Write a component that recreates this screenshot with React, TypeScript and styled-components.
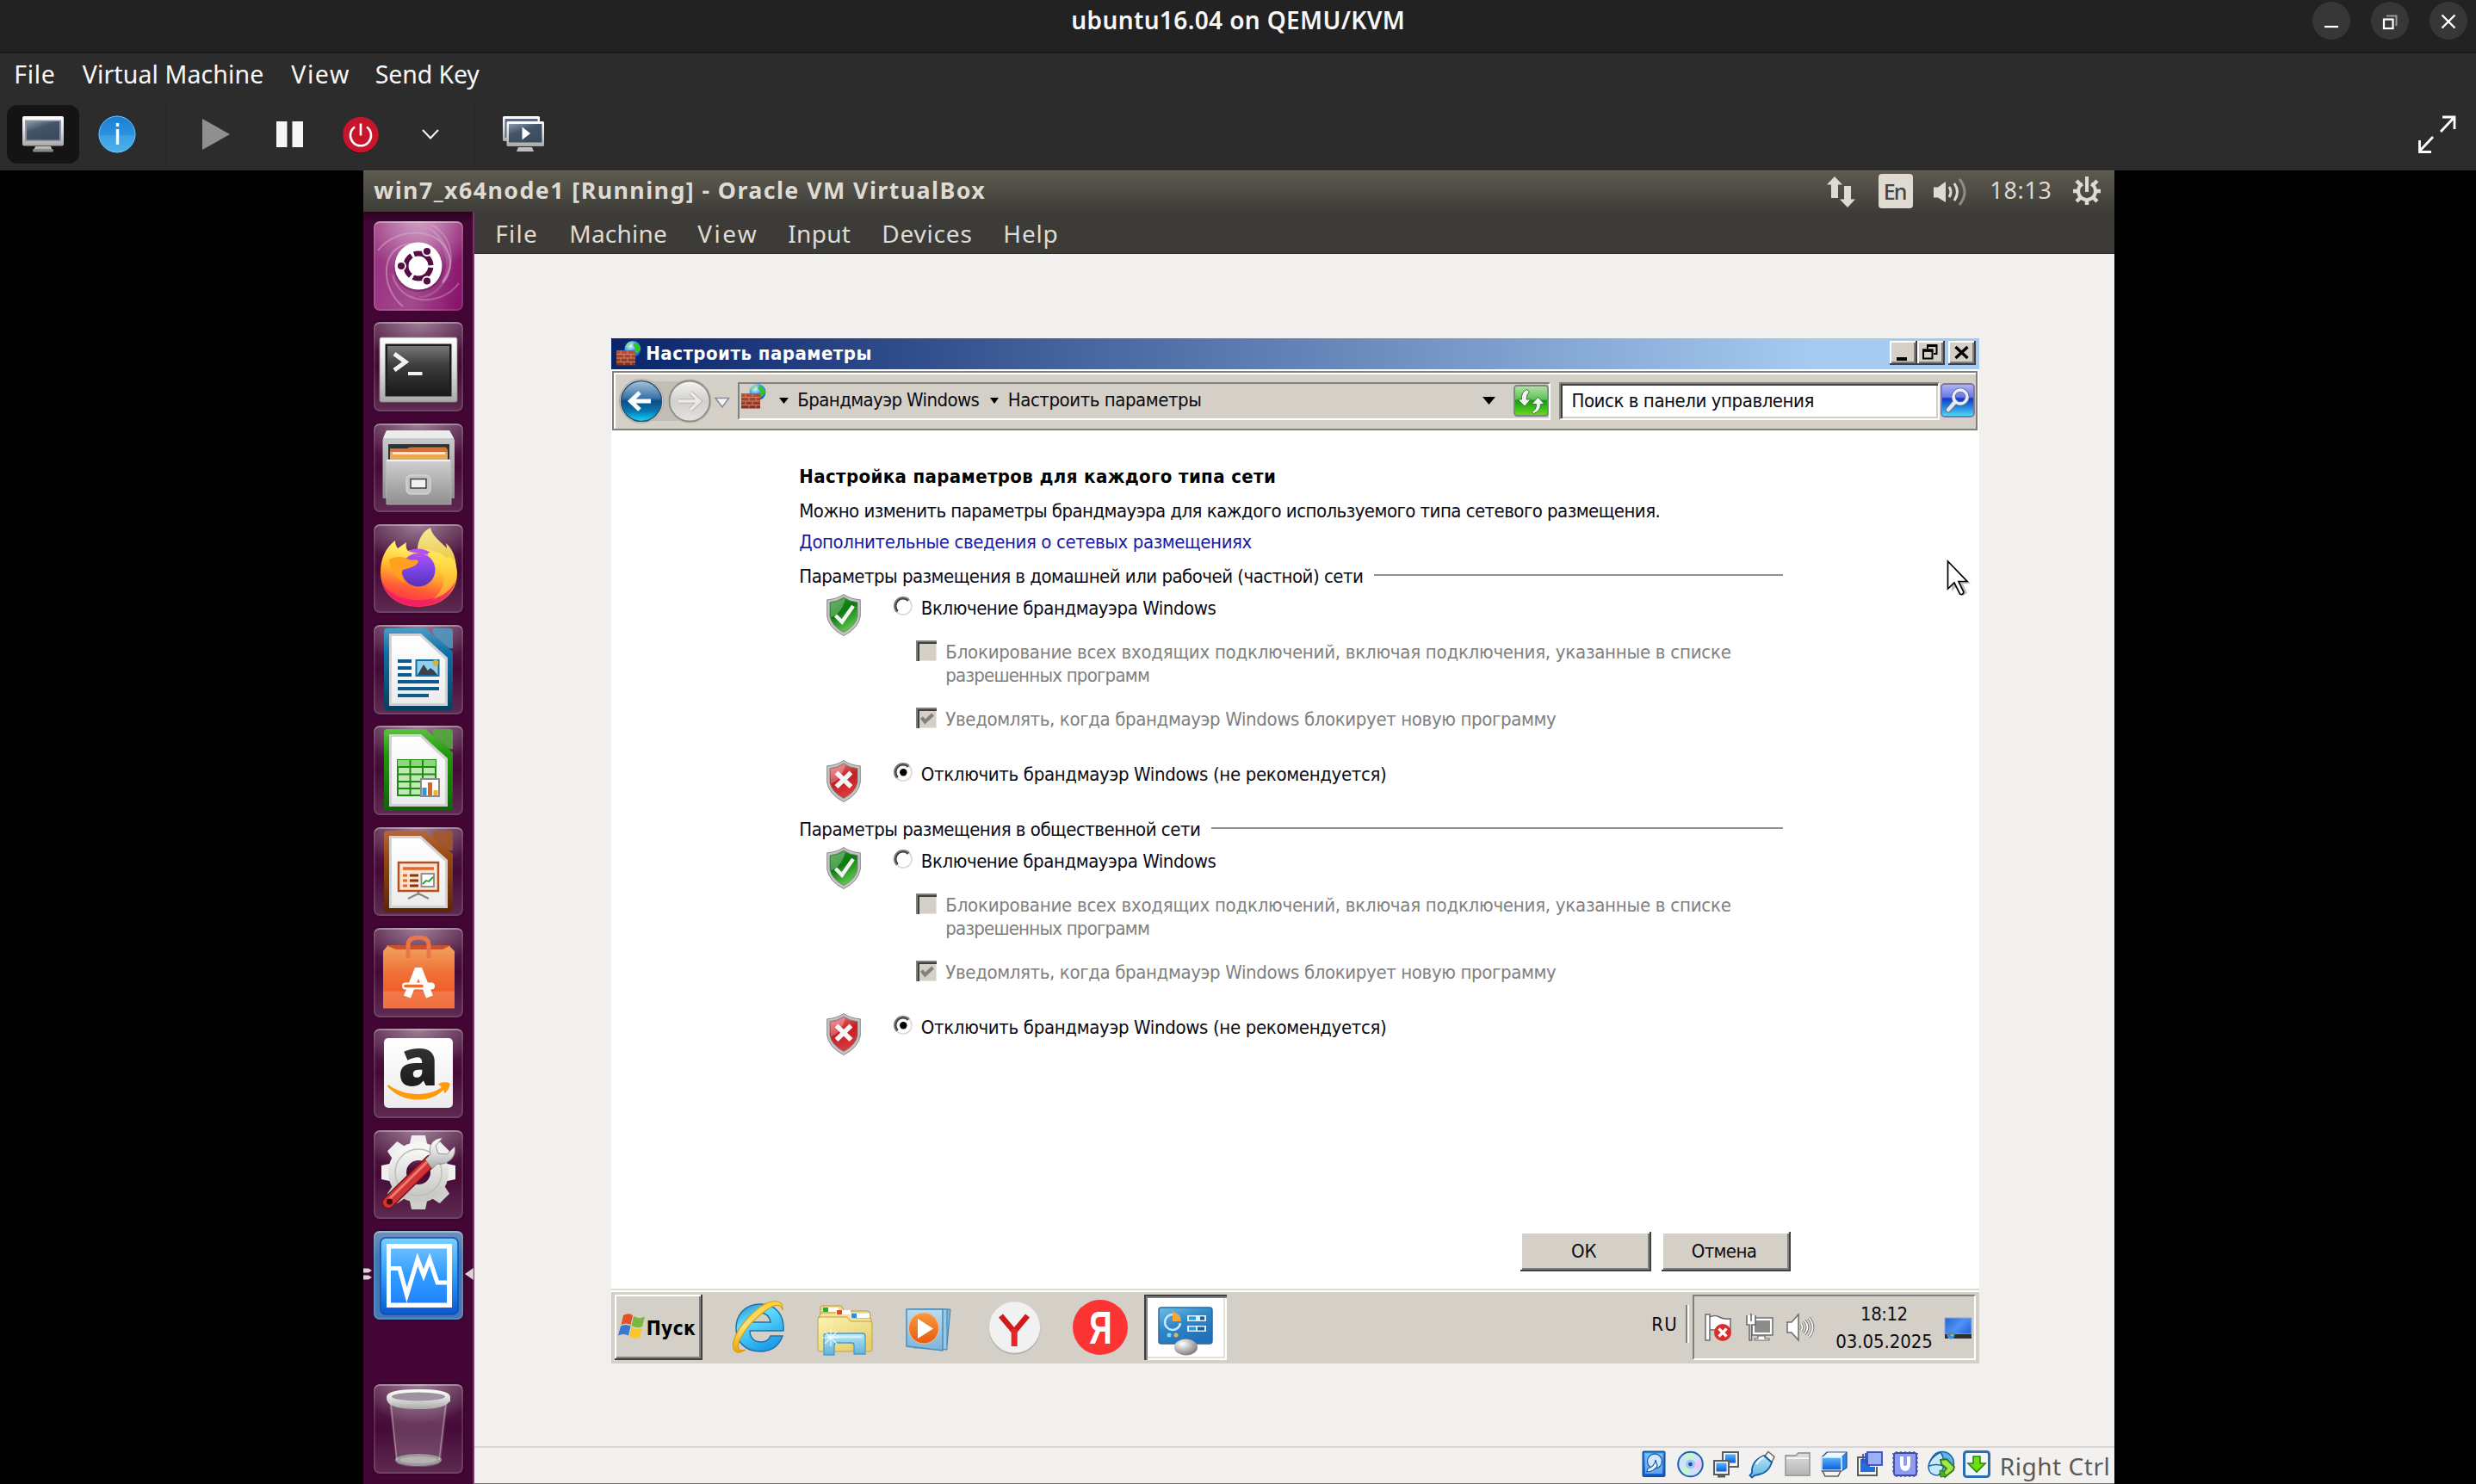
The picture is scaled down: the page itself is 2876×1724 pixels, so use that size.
import React, { useLayoutEffect, useRef, useState } from "react";
import styled, { createGlobalStyle, css } from "styled-components";

const Global = createGlobalStyle`
  html, body { margin: 0; padding: 0; background: #000; }
  * { box-sizing: border-box; }
  svg { display: block; flex: none; overflow: visible; }
`;

const uiFont = `"Noto Sans", "Open Sans", sans-serif`;
const winFont = `"DejaVu Sans Condensed", "DejaVu Sans", "Liberation Sans", sans-serif`;

/* ---------- text that is tracked to a known width ---------- */
const FitBox = styled.span<{ $w: number }>`
  display: block;
  flex: none;
  width: ${(p) => p.$w}px;
  white-space: nowrap;
`;
const FitInner = styled.span`
  display: inline-block;
  margin-left: -0.7px;
  font-variant-ligatures: none;
`;

function Fit({ w, children }: { w: number; children: string }) {
  const ref = useRef<HTMLSpanElement>(null);
  const [spacing, setSpacing] = useState(0);
  useLayoutEffect(() => {
    const el = ref.current;
    if (!el) return;
    const natural = el.getBoundingClientRect().width;
    setSpacing((w + 1.5 - natural) / Math.max(1, children.length - 1));
  }, []);
  return (
    <FitBox $w={w}>
      <FitInner ref={ref} style={{ letterSpacing: `${spacing}px` }}>
        {children}
      </FitInner>
    </FitBox>
  );
}

/* ---------- host window ---------- */
const Desktop = styled.div`
  position: relative;
  width: 2876px;
  height: 1724px;
  overflow: hidden;
  display: flex;
  flex-direction: column;
  background: #000;
`;
const HostTitle = styled.header`
  height: 62px;
  flex: none;
  display: grid;
  grid-template-columns: 1fr auto 1fr;
  background: #222;
  border-bottom: 2px solid #1a1a1a;
  font: 600 28px/38px ${uiFont};
  color: #f7f7f7;
  padding-top: 4px;
`;
const HostControls = styled.div`
  display: flex;
  justify-content: flex-end;
  gap: 24px;
  padding-right: 10px;
  margin-top: -2px;
`;
const RoundButton = styled.span`
  width: 44px;
  height: 44px;
  border-radius: 50%;
  background: #373737;
`;
const HostMenu = styled.nav`
  height: 52px;
  flex: none;
  display: flex;
  padding: 5px 0 0 17px;
  background: #2c2c2c;
  font: 400 28.5px/38px ${uiFont};
  color: #f7f7f7;
  border-bottom: 1px solid #292929;
`;
const MenuItem = styled.div<{ $gap: number }>`
  margin-left: ${(p) => p.$gap}px;
`;
const HostToolbar = styled.div`
  height: 84px;
  flex: none;
  display: flex;
  align-items: center;
  padding-left: 8px;
  background: #2c2c2c;
`;
const ToolButton = styled.div<{ $w: number; $active?: boolean }>`
  width: ${(p) => p.$w}px;
  height: 68px;
  display: flex;
  align-items: center;
  justify-content: center;
  border-radius: 12px;
  background: ${(p) => (p.$active ? "#141414" : "transparent")};
`;
const ToolSeparator = styled.div`
  width: 2px;
  height: 68px;
  background: #282828;
`;
const Spring = styled.div`
  flex: 1;
`;

/* ---------- Ubuntu screen ---------- */
const VmScreen = styled.main`
  flex: 1;
  min-height: 0;
  width: 2034px;
  margin-left: 422px;
  display: flex;
  flex-direction: column;
`;
const TopPanel = styled.div`
  height: 48px;
  flex: none;
  display: flex;
  align-items: flex-start;
  padding: 5px 16px 0 13px;
  background: linear-gradient(#5d5a50, #3e3d38);
  box-shadow: inset 0 1px #6a675d;
  color: #dfdbd2;
  font: 700 26.8px/36px ${uiFont};
`;
const Indicator = styled.div<{ $gap: number; $top?: number }>`
  margin: ${(p) => p.$top ?? 0}px 0 0 ${(p) => p.$gap}px;
  font-weight: 400;
`;
const LangBox = styled.div`
  width: 40px;
  height: 40px;
  margin: -1px 0 0 26px;
  padding-left: 7px;
  border-radius: 4px;
  background: #dfdbd2;
  color: #45443f;
  font: 500 25px/40px ${uiFont};
`;
const VmBody = styled.div`
  flex: 1;
  min-height: 0;
  display: flex;
`;
const Launcher = styled.aside`
  width: 129px;
  flex: none;
  display: flex;
  flex-direction: column;
  align-items: flex-start;
  gap: 13.7px;
  padding: 11px 0 0 11.5px;
  background: linear-gradient(#2a0420, #430634 14px);
  border-right: 2px solid #6d3a62;
`;
const Tile = styled.div<{ $kind?: "dash" | "active"; $push?: number }>`
  position: relative;
  width: 104px;
  height: 103.6px;
  flex: none;
  margin-top: ${(p) => p.$push ?? 0}px;
  border-radius: 7px;
  background: radial-gradient(ellipse 70px 46px at 50% 0, rgba(255, 255, 255, 0.42), rgba(255, 255, 255, 0)),
    linear-gradient(rgba(255, 255, 255, 0.12), rgba(255, 255, 255, 0.02) 50%, rgba(255, 255, 255, 0.15));
  box-shadow: inset 0 0 0 2px rgba(255, 255, 255, 0.12), inset 0 2px rgba(255, 255, 255, 0.25), 0 0 3px rgba(0, 0, 0, 0.5);
  ${(p) =>
    p.$kind === "dash" &&
    css`
      background: radial-gradient(ellipse 70px 60px at 50% 0, #cf9cc1, rgba(180, 90, 160, 0)),
        linear-gradient(100deg, #96307d, #a34a8e 50%, #850d68);
    `}
  ${(p) =>
    p.$kind === "active" &&
    css`
      background: linear-gradient(#6f92b8, #3f77b5 30%, #4278b6);
    `}
`;
const RunMark = styled.div<{ $side: "left" | "right" }>`
  position: absolute;
  top: 42px;
  ${(p) => (p.$side === "left" ? "left: -11.5px;" : "right: -12px;")}
`;
const VmMain = styled.section`
  flex: 1;
  min-width: 0;
  display: flex;
  flex-direction: column;
  background: #f1f0ee;
`;
const VmMenu = styled.nav`
  height: 49px;
  flex: none;
  display: flex;
  padding: 6px 0 0 25px;
  background: #3c3b37;
  border-bottom: 1px solid #2f2e2b;
  color: #dfdbd2;
  font: 400 28px/38px ${uiFont};
`;
const GuestArea = styled.div`
  flex: 1;
  min-height: 0;
  padding: 97.7px 0 0 159px;
`;
const StatusBar = styled.footer`
  height: 44px;
  flex: none;
  display: flex;
  align-items: flex-start;
  padding: 3px 0 0 1355px;
  gap: 9.6px;
  border-top: 2px solid #d9d7d4;
  border-bottom: 1.5px solid #6f6d6a;
  background: #f2f1ef;
  color: #5a5a5a;
  font: 400 28px/38px ${uiFont};
`;
const HostKey = styled.div`
  margin: -1px 0 0 1.5px;
`;

/* ---------- Windows guest ---------- */
const Guest = styled.div`
  width: 1589px;
  height: 1191.6px;
  display: flex;
  flex-direction: column;
  background: #fff;
  font: 400 22px/28px ${winFont};
  font-stretch: condensed;
  color: #0b0b14;
`;
const raised = css`
  background: #d4d0c8;
  box-shadow: inset -2px -2px #404040, inset 2px 2px #fff, inset -4px -4px #808080;
`;
const WinTitle = styled.div`
  height: 36px;
  flex: none;
  display: flex;
  align-items: flex-start;
  padding: 3px 4px 0 6px;
  background: linear-gradient(90deg, #0a246a, #a6caf0 88%);
  color: #fff;
  font-weight: 700;
`;
const WinTitleText = styled.div`
  margin: 1.5px 0 0 6px;
`;
const WinButton = styled.div<{ $gap?: number }>`
  ${raised}
  width: 32px;
  height: 28px;
  margin-left: ${(p) => p.$gap ?? 0}px;
`;
const NavBar = styled.div`
  height: 69px;
  flex: none;
  display: flex;
  align-items: flex-start;
  margin: 2.3px 2px 0 1px;
  padding: 11px 0 0 5.5px;
  background: #d4d0c8;
  border: 2px solid #848078;
  box-shadow: inset 2px 2px #fff;
`;
const AddressBox = styled.div`
  width: 946px;
  height: 44px;
  display: flex;
  align-items: flex-start;
  margin-left: 9px;
  padding-left: 2.5px;
  border: 2px solid;
  border-color: #808080 #fff #fff #808080;
`;
const Crumb = styled.div<{ $gap: number }>`
  margin: 5px 0 0 ${(p) => p.$gap}px;
`;
const Glyph = styled.div<{ $gap?: number; $top?: number }>`
  flex: none;
  margin: ${(p) => p.$top ?? 0}px 0 0 ${(p) => p.$gap ?? 0}px;
`;
const SearchBox = styled.div`
  width: 443px;
  height: 44px;
  margin-left: 9.5px;
  padding: 6.5px 0 0 13.5px;
  background: #fff;
  border: 2px solid;
  border-color: #808080 #fff #fff #808080;
  box-shadow: inset 2px 2px #404040, inset -2px -2px #d4d0c8;
`;
const Page = styled.div`
  flex: 1;
  min-height: 0;
  display: flex;
  flex-direction: column;
  padding: 40.4px 0 0 219px;
`;
const Heading = styled.div`
  height: 26px;
  font-weight: 700;
  color: #000;
`;
const Paragraph = styled.div`
  height: 26px;
  margin-top: 14px;
`;
const LinkLine = styled.a`
  height: 26px;
  margin-top: 9.6px;
  color: #1a1aa6;
`;
const Group = styled.section<{ $first?: boolean }>`
  height: 294px;
  flex: none;
  margin-top: ${(p) => (p.$first ? 14 : 0)}px;
`;
const GroupTitle = styled.div`
  display: flex;
  width: 1142px;
  height: 26px;
`;
const GroupRule = styled.div`
  flex: 1;
  height: 2px;
  margin: 11px 0 0 13px;
  background: #909090;
`;
const Option = styled.div<{ $h: number }>`
  display: flex;
  height: ${(p) => p.$h}px;
  padding-left: 31px;
`;
const OptionBody = styled.div`
  padding: 3px 0 0 38px;
`;
const RadioRow = styled.div`
  display: flex;
  height: 26px;
  align-items: flex-start;
  gap: 10.5px;
`;
const CheckRow = styled.div<{ $gap: number }>`
  display: flex;
  gap: 11px;
  margin: ${(p) => p.$gap}px 0 0 26px;
  color: #808080;
  line-height: 26.6px;
`;
const CheckBox = styled.div`
  width: 24px;
  height: 24px;
  margin-top: -1px;
  background: #d4d0c8;
  box-shadow: inset 2px 2px #808080, inset 4px 4px #404040, inset -1px -1px #e8e6e1;
`;
const Buttons = styled.div`
  display: flex;
  gap: 12px;
  padding-left: 837px;
  margin-top: 187.5px;
`;
const PushButton = styled.div<{ $w: number }>`
  ${raised}
  width: ${(p) => p.$w}px;
  height: 46px;
  display: flex;
  justify-content: center;
  padding: 8.5px 4px 0 0;
`;
const TaskBar = styled.div`
  height: 87px;
  flex: none;
  display: flex;
  align-items: flex-start;
  padding: 5px 4px 0 4px;
  background: #d4d0c8;
  border-top: 2px solid #dedbd4;
  box-shadow: inset 0 2px #fff;
`;
const StartButton = styled.div`
  ${raised}
  width: 102px;
  height: 76px;
  display: flex;
  padding: 22px 0 0 4px;
  font-weight: 700;
  font-size: 22.5px;
  color: #000;
`;
const StartText = styled.div`
  margin: 2.5px 0 0 1.5px;
`;
const ActiveTask = styled.div`
  width: 96px;
  height: 76px;
  margin-left: 18.5px;
  padding: 14px 0 0 16px;
  background: #fff;
  box-shadow: inset 2px 2px #404040, inset 4px 4px #808080, inset -2px -2px #fff, inset -4px -4px #e4e1db;
`;
const LangText = styled.div`
  margin: 21px 2px 0 0;
`;
const LangRule = styled.div`
  width: 4px;
  height: 44px;
  margin: 12px 4px 0 8.5px;
  background: #808080;
  border-right: 2px solid #fff;
`;
const Tray = styled.div`
  width: 329.5px;
  height: 76px;
  display: flex;
  padding: 20px 0 0 11px;
  border: 2px solid;
  border-color: #808080 #fff #fff #808080;
`;
const Clock = styled.div`
  width: 112px;
  height: 64px;
  margin: -12px 0 0 26px;
  display: flex;
  flex-direction: column;
  align-items: center;
  gap: 6px;
  line-height: 26px;
`;
const Pointer = styled.div`
  position: absolute;
  left: 2260.5px;
  top: 650px;
`;

/* ---------- shared gradients ---------- */
const grad = (id: string, stops: [number, string][], x2 = 0, y2 = 1) => (
  <linearGradient id={id} x1="0" y1="0" x2={x2} y2={y2}>
    {stops.map(([o, c]) => (
      <stop key={o} offset={o} stopColor={c} />
    ))}
  </linearGradient>
);
const DefsHolder = styled.svg`
  position: absolute;
`;
const Defs = () => (
  <DefsHolder width="0" height="0">
    <defs>
      {grad("silver", [[0, "#ffffff"], [0.5, "#dcdcdc"], [1, "#a8a8a8"]])}
      {grad("screen", [[0, "#8b98a8"], [0.45, "#445468"], [1, "#3c4a5e"]], 0.6, 1)}
      {grad("term", [[0, "#777"], [0.4, "#3c3c3c"], [1, "#1a1a1a"]])}
      {grad("info", [[0, "#1a7fd4"], [0.52, "#2b92de"], [0.54, "#3ba0e4"], [1, "#4db1ea"]])}
      {grad("drawer", [[0, "#d0d0d0"], [1, "#8f8f8f"]])}
      {grad("fox", [[0, "#fff36b"], [0.3, "#ffc02e"], [0.6, "#ff5a36"], [0.85, "#ff2a52"], [1, "#e5017c"]], -0.25, 1)}
      {grad("foxTail", [[0, "#fff89a"], [0.5, "#ffdb45"], [1, "#ffa02c"]])}
      {grad("foxGlobe", [[0, "#b84ff0"], [0.5, "#7a45e8"], [1, "#5a2fb0"]])}
      {grad("page", [[0, "#ffffff"], [1, "#ececec"]])}
      {grad("docBlue", [[0, "#4a9cc8"], [0.3, "#0f6fa5"], [1, "#06405f"]])}
      {grad("docGreen", [[0, "#5cc040"], [0.3, "#1f9a0c"], [1, "#116205"]])}
      {grad("docBrown", [[0, "#b5673c"], [0.3, "#9a4a12"], [1, "#5c2603"]])}
      {grad("bag", [[0, "#f0a25e"], [0.45, "#ee6f35"], [0.72, "#f0602a"], [0.73, "#f2794a"], [1, "#ee7040"]])}
      {grad("amz", [[0, "#777"], [0.35, "#333"], [1, "#111"]])}
      {grad("gear", [[0, "#f6f6f4"], [1, "#c9c9c6"]])}
      {grad("vbOut", [[0, "#7cd0ff"], [0.5, "#2f9cf8"], [1, "#0c55d0"]])}
      {grad("vbIn", [[0, "#67beff"], [0.5, "#309cff"], [1, "#2283ff"]])}
      {grad("back", [[0, "#a8c4dc"], [0.42, "#3a74a8"], [0.5, "#0b4f86"], [0.75, "#0878b4"], [1, "#10d8ff"]])}
      {grad("fwd", [[0, "#f4f4f2"], [0.5, "#d2d0cc"], [1, "#e4e2de"]])}
      {grad("green", [[0, "#b4e4a8"], [0.45, "#5fbf58"], [0.5, "#149a14"], [1, "#6cdc20"]])}
      {grad("find", [[0, "#b4b8f4"], [0.4, "#6a78e4"], [0.45, "#1238c8"], [0.7, "#2484dc"], [1, "#50e0f8"]])}
      {grad("shieldG", [[0, "#1f9a22"], [0.5, "#0c7a10"], [1, "#5ec84a"]], 0.5, 1)}
      {grad("shieldR", [[0, "#f08080"], [0.5, "#c41c22"], [1, "#d83a3a"]], 0.3, 1)}
      {grad("ie", [[0, "#1e86cc"], [0.4, "#5fdcff"], [1, "#1c9ee8"]], 0.5, 1)}
      {grad("gold", [[0, "#ffd23a"], [0.5, "#fbe27a"], [1, "#e8a400"]])}
      {grad("folder", [[0, "#fdf2b4"], [1, "#e6cf6a"]], 0.7, 1)}
      {grad("sky", [[0, "#b8e6f8"], [1, "#5fb2dc"]])}
      {grad("wmp", [[0, "#bcdcf0"], [1, "#7cb4dc"]])}
      {grad("orange", [[0, "#f89a40"], [1, "#e85a10"]])}
      {grad("cp", [[0, "#6cc0ec"], [0.5, "#2f86c8"], [1, "#2270b8"]], 0.6, 1)}
      {grad("blue", [[0, "#58b4ff"], [1, "#0c5cd8"]])}
      {grad("desk", [[0, "#2a62d0"], [0.6, "#4f94f4"], [1, "#2f6ee0"]], 1, 0.6)}
      {grad("grey", [[0, "#e0e0e0"], [1, "#b4b4b4"]])}
      {grad("brick", [[0, "#b4573c"], [1, "#8a2c18"]])}
      <radialGradient id="globe" cx="0.35" cy="0.3" r="0.8">
        <stop offset="0" stopColor="#e8f8ff" />
        <stop offset="0.4" stopColor="#4fa8f0" />
        <stop offset="1" stopColor="#1450b8" />
      </radialGradient>
      <radialGradient id="ball" cx="0.35" cy="0.3" r="0.8">
        <stop offset="0" stopColor="#fff" />
        <stop offset="0.5" stopColor="#b8b8b8" />
        <stop offset="1" stopColor="#707070" />
      </radialGradient>
    </defs>
  </DefsHolder>
);

/* ---------- host icons ---------- */
const IconMonitor = () => (
  <svg width="48" height="42" viewBox="0 0 48 42">
    <path d="M15 35h18l2 5H13z" fill="#b9b9b9" />
    <rect x="12" y="38" width="24" height="3.500" rx="1.500" fill="#8b8b8b" />
    <rect x="0" y="0" width="48" height="34.500" rx="2" fill="url(#silver)" />
    <rect x="3" y="4.500" width="42" height="24.500" fill="#8d97a3" />
    <rect x="5" y="6" width="38" height="21.500" fill="url(#screen)" />
  </svg>
);
const IconInfo = () => (
  <svg width="46" height="46" viewBox="0 0 46 46">
    <circle cx="23" cy="23" r="22.500" fill="#16324c" />
    <circle cx="23" cy="23" r="21" fill="url(#info)" stroke="#7cc4f4" strokeWidth="1" />
    <path d="M23.500 17v18M23.500 10v4" stroke="#fff" strokeWidth="3.400" />
  </svg>
);
const IconScreens = () => (
  <svg width="48" height="42" viewBox="0 0 48 42">
    <rect width="43" height="29" rx="1.500" fill="url(#silver)" />
    <rect x="2.500" y="3" width="38" height="22" fill="#5a6b80" />
    <path d="M18 36h16l2 5H16z" fill="#bdbdbd" />
    <rect x="4.500" y="6" width="43.500" height="29" rx="1.500" fill="url(#silver)" />
    <rect x="7" y="9" width="38.500" height="21.500" fill="url(#screen)" />
    <path d="M22.500 12.500v15l9.500-7.500z" fill="#fff" />
  </svg>
);

/* ---------- launcher art ---------- */
const Art = ({ children }: { children: React.ReactNode }) => (
  <svg width="104" height="104" viewBox="0 0 104 104">
    {children}
  </svg>
);
const Doc = ({ fill, tip, children }: { fill: string; tip: string; children: React.ReactNode }) => (
  <Art>
    <path d="M12 8q0-4 4-4h44l32 27v64q0 4-4 4H16q-4 0-4-4z" fill={`url(#${fill})`} />
    <path d="M69 4h19q4 0 4 4v19q-4 1-7-2L71 13q-4-4-2-9z" fill={tip} opacity="0.85" />
    <path d="M18 10h37l31 28v56H18z" fill="#d2d2d2" />
    <path d="M21 13h33l29 27v51H21z" fill="url(#page)" />
    {children}
  </Art>
);
const DashArt = () => (
  <Art>
    <path d="M5 34C28 4 84 6 89 46 90 56 86 66 80 72" fill="none" stroke="#dcb0d1" strokeWidth="2" opacity="0.5" />
    <path d="M34 99C6 76 8 28 44 26c14 0 24 6 30 14" fill="none" stroke="#dcb0d1" strokeWidth="2" opacity="0.5" />
    <path d="M99 72C78 100 30 98 22 62M66 4c24 10 32 44 14 66" fill="none" stroke="#dcb0d1" strokeWidth="2" opacity="0.4" />
    <path d="M89 46C90 76 66 92 50 88c20-2 34-14 34-40C82 28 74 14 60 6c18 6 28 22 29 40z" fill="#fff" opacity="0.15" />
    <circle cx="52" cy="53.500" r="28.500" fill="#3a0630" opacity="0.35" />
    <circle cx="52" cy="52" r="27.500" fill="#fff" />
    <circle cx="52" cy="52" r="14.500" fill="none" stroke="#560d44" strokeWidth="6" strokeDasharray="27 3.370" strokeDashoffset="-2" transform="rotate(0 52 52)" />
    {[[32, 52], [62, 35], [62, 69.500]].map(([x, y]) => (
      <circle key={`${x}${y}`} cx={x} cy={y} r="5" fill="#560d44" stroke="#fff" strokeWidth="1.800" />
    ))}
  </Art>
);
const TerminalArt = () => (
  <Art>
    <rect x="7" y="18" width="90" height="75" rx="2" fill="url(#silver)" stroke="#8a8a8a" strokeWidth="0.800" />
    <rect x="13.500" y="25.500" width="77" height="61" fill="#1c1c1c" />
    <rect x="16" y="28" width="72" height="56" fill="url(#term)" />
    <path d="M24 37l13 9.500L24 56" fill="none" stroke="#f2f2f2" strokeWidth="5" />
    <path d="M40 60h16.500" stroke="#f2f2f2" strokeWidth="4" />
  </Art>
);
const FilesArt = () => (
  <Art>
    <path d="M15 8h73l6 11v68H10.500V19z" fill="url(#drawer)" />
    <path d="M15 8h73l5 9H11z" fill="#ececec" />
    <rect x="17" y="24" width="71" height="20" fill="#2f3330" />
    <path d="M19 29h20l3-1.500h42l2 3v13H19z" fill="#d5713c" />
    <path d="M19 33h67v10H19z" fill="#eda552" />
    <path d="M22 34.500h61" stroke="#fff3e0" strokeWidth="2.500" />
    <path d="M14 44q0-2 2-2h72q2 0 2 2v50H15z" fill="url(#drawer)" stroke="#b5b5b5" strokeWidth="0.800" />
    <path d="M15 43h74" stroke="#f0f0f0" strokeWidth="2" />
    <rect x="38" y="60" width="28" height="22" rx="5" fill="#c4c4c4" stroke="#dedede" />
    <rect x="43" y="64.500" width="18" height="10.500" fill="#f2f2f2" stroke="#4a4a4a" strokeWidth="1.600" />
  </Art>
);
const FirefoxArt = () => (
  <Art>
    <path d="M8 56C8 40 14 27 25 19c0 4 1 6 3 9l10-7c-1 5 0 8 2 10 14-4 34-2 44 8 8-4 13 8 13 18 0 24-19 39-45 39S8 80 8 56z" fill="url(#fox)" />
    <path d="M51 37C49 20 57 8 66 4c2 10 12 16 19 24 0-2-1-4-1-6 10 9 13 22 12 38-2 14-14 26-28 28 14-12 18-26 8-36-6-10-15-15-25-15z" fill="url(#foxTail)" opacity="0.9" />
    <circle cx="52" cy="53" r="19.500" fill="url(#foxGlobe)" />
    <path d="M18 41c9-5 18-3 23 0 5 2 10-1 11 2-1 6-11 8-18 10-3 5-2 10 2 16-8-6-18-16-18-28z" fill="#ffa01f" />
    <path d="M40 31c10-5 20-2 26 2-4 0-4 2-2 3-9-3-17-2-24-5z" fill="#b450f0" />
    <path d="M9 66c6 20 24 29 43 29s38-9 43-29c-8 16-24 22-43 22S18 82 9 66z" fill="#e8107a" opacity="0.6" />
  </Art>
);
const WriterArt = () => (
  <Doc fill="docBlue" tip="#4f9cc6">
    <g stroke="#0b5c8e" strokeWidth="3.800">
      <path d="M28 42h16M28 50h16M28 58h16M28 66h48M28 74h48M28 82h36" />
    </g>
    <rect x="49.500" y="41" width="26" height="18" fill="#8fd0ee" stroke="#0f6fa5" strokeWidth="2" />
    <circle cx="72" cy="44" r="3.500" fill="#d2b53a" />
    <path d="M51 58l7-12 5 7 3-3 4 3 4 5z" fill="#3d4348" />
  </Doc>
);
const CalcArt = () => (
  <Doc fill="docGreen" tip="#4fb236">
    <rect x="28" y="40" width="44" height="41" fill="#bfe9b4" stroke="#1d8a10" strokeWidth="2" />
    <rect x="28" y="40" width="44" height="8" fill="#8fd67c" />
    <path d="M28 48h44M28 56.500h44M28 65h44M28 73h44M42.500 40v41M57 40v41" stroke="#1d8a10" strokeWidth="2" />
    <rect x="55" y="62" width="21" height="20" fill="#fff" stroke="#8a8a8a" strokeWidth="2" />
    <path d="M59 81V72" stroke="#2b97d8" strokeWidth="5" />
    <path d="M65.500 81V66" stroke="#dd6420" strokeWidth="5" />
    <path d="M72 81v-6" stroke="#efb52a" strokeWidth="5" />
  </Doc>
);
const ImpressArt = () => (
  <Doc fill="docBrown" tip="#a65b25">
    <path d="M52 75v4M52 77l-12 6M52 77l12 6" stroke="#888" strokeWidth="2.500" />
    <rect x="29" y="41" width="46" height="33" fill="#fbe4d6" stroke="#b7501a" strokeWidth="2.500" />
    <path d="M34 48h36" stroke="#dd6a2c" strokeWidth="3.600" />
    <path d="M34 56h5M34 62h5M34 68h5" stroke="#dd6a2c" strokeWidth="3.200" />
    <path d="M42 56h10M42 62h10M42 68h10" stroke="#8a3505" strokeWidth="3.200" />
    <rect x="55.500" y="54" width="14.500" height="15" fill="#fff" stroke="#888" strokeWidth="1.800" />
    <path d="M57 66l4-4 3 1 5-5" fill="none" stroke="#2d9a2d" strokeWidth="1.800" />
  </Doc>
);
const SoftwareArt = () => (
  <Art>
    <path d="M15 20h74v8H15z" fill="#c9502a" />
    <path d="M11 27l5-6 10 4h54l8-4 6 6v66.500H11z" fill="url(#bag)" />
    <path d="M40 35V20q0-9 12-9t12 9v15" fill="none" stroke="#e8764a" strokeWidth="5" />
    <path d="M39 80l13-32.500L65 80" fill="none" stroke="#fff" strokeWidth="8.500" strokeLinejoin="bevel" />
    <path d="M37 67.500h30" stroke="#fff" strokeWidth="8" strokeLinecap="round" />
    <path d="M37 67.500h19" stroke="#ee6a30" strokeWidth="3.500" strokeLinecap="round" />
  </Art>
);
const AmazonArt = () => (
  <Art>
    <rect x="12" y="11" width="80" height="81" rx="5" fill="url(#page)" />
    <text x="52" y="66" textAnchor="middle" fontFamily="Open Sans, Liberation Sans, sans-serif" fontWeight="800" fontSize="76" fill="url(#amz)">
      a
    </text>
    <path d="M17 65c16 13 46 15 62 3l-4-3.500c5-3 10-2.500 13.500-1 0 5-3 9-6 12l-1-4.500C64 88 32 86 16 67z" fill="#ff9a0a" />
  </Art>
);
const SettingsArt = () => (
  <Art>
    <g>
      {[0, 45, 90, 135, 180, 225, 270, 315].map((a) => (
        <path key={a} d="M41 20l3-14h16l3 14z" fill={a > 90 && a < 270 ? "#cfcfcc" : "#efefed"} transform={`rotate(${a} 52 49)`} />
      ))}
      <circle cx="52" cy="49" r="24.500" fill="none" stroke="url(#gear)" strokeWidth="21" />
      <circle cx="52" cy="49" r="27" fill="none" stroke="#bdbdba" strokeWidth="1.500" />
    </g>
    <path d="M17 84L66 36" stroke="#7c0f12" strokeWidth="15" strokeLinecap="round" />
    <path d="M17 84L66 36" stroke="#cf3336" strokeWidth="12" strokeLinecap="round" />
    <path d="M18 80L64 35" stroke="#ef7a78" strokeWidth="3" strokeLinecap="round" />
    <circle cx="18.500" cy="83" r="3.500" fill="#4a0709" />
    <path d="M60 34l6-6c-3-10 3-19 14-19l-8 9 3 9 10 1 9-9c3 12-8 22-20 20l-6 6z" fill="url(#silver)" stroke="#7c7c7c" strokeWidth="0.800" />
  </Art>
);
const VBoxArt = () => (
  <Art>
    <rect x="8" y="8" width="90" height="89" rx="6" fill="url(#vbOut)" stroke="#0c4fb8" strokeWidth="1.500" />
    <rect x="15" y="15" width="76" height="74" fill="#fff" />
    <rect x="20" y="20.500" width="65" height="63" fill="url(#vbIn)" />
    <path d="M20 43.500h10l8.500 31L51 33l7 18.500L65 33l9 27h11" fill="none" stroke="#fff" strokeWidth="5" />
  </Art>
);
const TrashArt = () => (
  <Art>
    <path d="M18 20h68l-8 70q-2 6-26 6t-26-6z" fill="#fff" opacity="0.18" />
    <ellipse cx="52" cy="88" rx="27" ry="7" fill="#9a9a98" />
    <ellipse cx="52" cy="88" rx="22" ry="4" fill="#b4b2b2" />
    <path d="M84 22l-8 66M20 22l7 66" stroke="#fff" strokeWidth="1.500" opacity="0.35" />
    <path d="M15 15q0-9 37-9t37 9-1 5q-4 9-36 9t-36-9q-1-1-1-5z" fill="url(#silver)" />
    <ellipse cx="52" cy="14.500" rx="31" ry="5" fill="#9d939f" />
  </Art>
);

/* ---------- Windows art ---------- */
const Firewall = () => (
  <svg width="29" height="29" viewBox="0 0 29 29">
    <circle cx="19" cy="9.500" r="9.500" fill="url(#globe)" />
    <path d="M22 2q6 3 6 8l-4 5-3-3 1-4-3-3z" fill="#35c22c" />
    <path d="M12 5q3-4 6-4l-2 4-4 3z" fill="#8be07c" />
    <rect x="0" y="11" width="22" height="17.500" fill="url(#brick)" />
    <path d="M0 15.500h22M0 20h22M0 24.500h22M5 11v4.500M13 11v4.500M9 15.500V20M17 15.500V20M5 20v4.500M13 20v4.500M9 24.500V28M17 24.500V28" stroke="#c98570" strokeWidth="1" />
  </svg>
);
const DownTri = ({ w, h }: { w: number; h: number }) => (
  <svg width={w} height={h} viewBox="0 0 10 8" preserveAspectRatio="none">
    <path d="M0 0h10L5 8z" fill="#000" />
  </svg>
);
const NavArrows = () => (
  <svg width="129" height="52" viewBox="0 0 129 52">
    <path d="M26 3h56v46H26z" fill="#bdb9b0" opacity="0.8" />
    <circle cx="26" cy="26" r="25.500" fill="#e8e6e2" stroke="#a8a49c" />
    <circle cx="26" cy="26" r="23.500" fill="url(#back)" stroke="#32506e" strokeWidth="1.500" />
    <path d="M37 26H14M24 16L13.500 26 24 36" fill="none" stroke="#fff" strokeWidth="5" />
    <circle cx="82" cy="26" r="25" fill="#d8d6d0" stroke="#b8b4ac" />
    <circle cx="82" cy="26" r="23.500" fill="url(#fwd)" stroke="#8a8a88" strokeWidth="1.800" />
    <path d="M69 26h23M83 16l10.500 10L83 36" fill="none" stroke="#b8b6b2" strokeWidth="5.500" />
    <path d="M69 26h23M83 16l10.500 10L83 36" fill="none" stroke="#ebeae8" strokeWidth="3.500" />
    <path d="M112 22.500h15.500L120 33z" fill="#f4f4f4" stroke="#8c8c94" strokeWidth="1.600" />
  </svg>
);
const Refresh = () => (
  <svg width="41" height="37" viewBox="0 0 41 37">
    <rect x="1" y="1" width="39" height="35" rx="3" fill="url(#green)" stroke="#7c887c" strokeWidth="1.800" />
    <g fill="#f4f6f4" stroke="#2f7a2c" strokeWidth="1">
      <path d="M15.500 5.500q-7 3-6 11.500H5l8 8 7-8h-5q0-6 3.500-9z" />
      <path d="M21 31.500q6-2.500 5.500-9H21l7.500-8 7.500 8h-4.500q0 8-8 11z" />
    </g>
  </svg>
);
const FindButton = () => (
  <svg width="41" height="40" viewBox="0 0 41 40">
    <rect x="1" y="1" width="38" height="38" rx="4" fill="url(#find)" stroke="#7878a0" strokeWidth="1.800" />
    <path d="M17 22L9 31" stroke="#5c6c9c" strokeWidth="6.500" strokeLinecap="round" />
    <circle cx="23" cy="16" r="8" fill="none" stroke="#5c6c9c" strokeWidth="5" />
    <path d="M17 22L9 31" stroke="#e4e8f4" strokeWidth="4.500" strokeLinecap="round" />
    <circle cx="23" cy="16" r="8" fill="none" stroke="#eceffa" strokeWidth="3.400" />
  </svg>
);
const Shield = ({ ok }: { ok?: boolean }) => (
  <svg width="40" height="49" viewBox="0 0 40 49">
    <path d="M20 .5Q12 6 .7 6.800V26Q3 40 20 48.500 37 40 39.300 26V6.800Q28 6 20 .5z" fill="#c4c4c4" stroke="#8a8a8a" />
    <path d="M20 4Q13 9 4 9.700V26Q6 37 20 44.500 34 37 36 26V9.700Q27 9 20 4z" fill={ok ? "url(#shieldG)" : "url(#shieldR)"} stroke="#6e7a6e" strokeWidth="0.800" />
    <path d="M20 5Q13 9.500 5 10.500V27Q17 24 22 5.500z" fill="#fff" opacity="0.28" />
    {ok ? (
      <path d="M10.500 25l7.500 7.500L31 14" fill="none" stroke="#f4f4f4" strokeWidth="4.500" />
    ) : (
      <path d="M11.500 14.500l17 16.500M28.500 14.500l-17 16.500" stroke="#f6f6f6" strokeWidth="5.500" />
    )}
  </svg>
);
const Radio = ({ on }: { on?: boolean }) => (
  <svg width="22" height="22" viewBox="0 0 22 22">
    <circle cx="11" cy="11" r="10" fill="#fff" stroke="#dcd9d2" strokeWidth="1.600" />
    <path d="M3.900 18.100A10 10 0 0 1 18.100 3.900" fill="none" stroke="#808080" strokeWidth="2" />
    <path d="M5 16.800A8.300 8.300 0 0 1 16.800 5" fill="none" stroke="#404040" strokeWidth="1.900" />
    {on && <circle cx="11.300" cy="11.300" r="4.200" fill="#000" />}
  </svg>
);
const DisabledCheck = () => (
  <svg width="24" height="24" viewBox="0 0 24 24">
    <path d="M6.500 11.500l4 5L19.500 8" fill="none" stroke="#808080" strokeWidth="4" />
  </svg>
);
const WinFlag = () => (
  <svg width="32" height="29" viewBox="0 0 32 29">
    <path d="M6 2q6-3.500 11 0l-2.500 11q-5-3-11 0z" fill="#e4502a" />
    <path d="M18 3q6 4 13 .5L28 15q-6 3-12.500-1z" fill="#78b83c" />
    <path d="M3 14.500q6-3 11.500 0L12 25.500q-6-3-12 0z" fill="#3a78d0" />
    <path d="M15.500 16q6 3.500 12.500.5l-2.500 11q-7 3-12.500-1z" fill="#fbc62c" />
  </svg>
);
const IeArt = () => (
  <svg width="61" height="62" viewBox="0 0 61 62">
    <path d="M32 5C14 5 4 18 4 33s10 27 28 27c13 0 22-7 26-18H44c-2 5-6 7-11 7-8 0-13-5-13-13h39C60 17 50 5 32 5zM20 26c1-7 6-11 12-11s11 4 12 11z" fill="url(#ie)" stroke="#2470a8" strokeWidth="1.500" />
    <path d="M58 12C60-2 42-2 25 14 8 29-4 50 2 59c2 3 7 3 13-1-4 1-7 1-8-1-3-6 7-24 21-36C41 9 55 0 58 12z" fill="url(#gold)" stroke="#d8a010" strokeWidth="1.200" />
  </svg>
);
const ExplorerArt = () => (
  <svg width="65" height="59" viewBox="0 0 65 59">
    <path d="M4 8V3q0-2 2-2h22l4 6h26q4 0 4 4v10H4z" fill="#f0dc8c" stroke="#b89a3c" />
    <path d="M7 3h18v5H7z" fill="#fff" /><path d="M7 3h6v5H7z" fill="#1cb42c" />
    <path d="M2 14l3-5h33l4 6h19q2 0 2 3v8H2z" fill="#f4e296" stroke="#b89a3c" />
    <path d="M22 6h17v5H22z" fill="#fff" /><path d="M23 6h6v5h-6z" fill="#d84a34" />
    <path d="M39 10h22v5H39z" fill="#fff" /><path d="M40 10h6v5h-6z" fill="#2890e4" />
    <path d="M1 17q0-3 3-3h31l4 5h22q3 0 3 3v30q0 2-3 2H3q-2 0-2-2z" fill="url(#folder)" stroke="#c0a446" />
    <path d="M8 57V36q0-3 3-3h42q3 0 3 3v21H43V47q0-3-3-3H23q-3 0-3 3v11H8z" fill="url(#sky)" stroke="#4a9cc4" strokeWidth="1.300" />
    <path d="M12 37h40" stroke="#e0f6ff" strokeWidth="3" opacity="0.8" />
    <path d="M16 28v20M6 38h20M9 31l14 14M23 31L9 45" stroke="#fff" strokeWidth="1.200" opacity="0.8" />
  </svg>
);
const WmpArt = () => (
  <svg width="60" height="52" viewBox="0 0 60 52">
    <path d="M10 2h42l-4 42-38 3z" fill="#7fb6da" stroke="#3c80b0" />
    <path d="M5 2h43v47L5 44z" fill="#98c8e6" stroke="#3c80b0" />
    <path d="M1 2h42v48L1 45z" fill="url(#wmp)" stroke="#4a8cb8" strokeWidth="1.500" />
    <ellipse cx="21" cy="24" rx="17.500" ry="18" fill="url(#orange)" stroke="#fbc490" strokeWidth="1" />
    <path d="M14 13v23l18-11.500z" fill="#fff" />
  </svg>
);
const LetterDisc = styled.div`
  width: 64px;
  height: 64px;
  flex: none;
  display: flex;
  justify-content: center;
  margin: 6px 0 0 37px;
  border-radius: 50%;
  background: #fc3434;
  color: #fff;
  font: 700 54px/64px "Liberation Sans", sans-serif;
`;
const NarrowLetter = styled.span`
  transform: scaleX(0.68);
`;
const YBrowser = () => (
  <svg width="61" height="62" viewBox="0 0 61 62">
    <circle cx="30.500" cy="31.500" r="30" fill="#9e9a94" opacity="0.6" />
    <circle cx="30.500" cy="30" r="29.700" fill="#f1f1f1" />
    <path d="M14.500 16.500L30 35 45.500 16.500" fill="none" stroke="#d21a1a" strokeWidth="6.500" />
    <path d="M30.200 32v20" stroke="#e8262a" strokeWidth="7" />
  </svg>
);
const CplArt = () => (
  <svg width="64" height="57" viewBox="0 0 64 57">
    <rect x="1" y="1" width="62" height="42" rx="3" fill="url(#cp)" stroke="#2c68a0" strokeWidth="1.500" />
    <path d="M17 9a9 9 0 1 0 9 10" fill="none" stroke="#c8ecfc" strokeWidth="2.500" />
    <path d="M17 6v11h10Q27 8 17 6z" fill="#f4a83c" />
    <rect x="34" y="10" width="22" height="7" fill="#d8f0fc" /><rect x="36" y="11.500" width="8" height="4" fill="#2c98dc" /><rect x="49" y="11.500" width="5" height="4" fill="#1c5ca4" />
    <rect x="34" y="22" width="22" height="7" fill="#d8f0fc" /><rect x="36" y="23.500" width="8" height="4" fill="#2c98dc" /><rect x="46" y="23.500" width="8" height="4" fill="#1c5ca4" />
    <circle cx="13" cy="33" r="2.500" fill="#7cdcf8" /><circle cx="21" cy="33" r="2.500" fill="#f0b060" />
    <ellipse cx="32.500" cy="47" rx="13.500" ry="9.500" fill="url(#ball)" />
  </svg>
);

/* ---------- VirtualBox status icons ---------- */
const St = ({ children }: { children: React.ReactNode }) => (
  <svg width="32" height="32" viewBox="0 0 32 32">
    {children}
  </svg>
);
const StatusIcons = () => (
  <>
    <St>
      <rect x="2.500" y="1.500" width="25" height="28.500" rx="1" fill="url(#blue)" stroke="#1254a4" strokeWidth="2" />
      <rect x="5" y="4" width="20" height="23" fill="#a4d4fc" opacity="0.55" />
      <circle cx="16" cy="12.500" r="8.500" fill="#cfe8fc" stroke="#1e5ca8" strokeWidth="1.300" />
      <path d="M17 11q-1 8-9 10l-1 4q9-1 12-7z" fill="#f2faff" stroke="#1e5ca8" strokeWidth="1.200" />
    </St>
    <St>
      <circle cx="15.500" cy="16" r="14.300" fill="#cfe4fb" stroke="#1c60b4" strokeWidth="2" />
      <path d="M15.500 16L8 5q7-4 12 0zM15.500 16l-11 6q3 6 9 7z" fill="#c8f4c8" />
      <path d="M15.500 16l12-5q2 8-3 13z" fill="#f0c8f4" />
      <circle cx="15.500" cy="16" r="5.500" fill="#9cc8f4" />
      <circle cx="15.500" cy="16" r="2.300" fill="#1c4c90" />
    </St>
    <St>
      <rect x="12" y="2" width="18" height="17" fill="#f4f4f4" stroke="#5c5c5c" strokeWidth="2" />
      <rect x="15" y="4.500" width="12" height="10" fill="url(#blue)" />
      <rect x="2" y="12" width="17" height="16" fill="#f4f4f4" stroke="#5c5c5c" strokeWidth="2" />
      <rect x="4.500" y="14.500" width="12" height="10" fill="url(#blue)" />
      <path d="M6 30h9" stroke="#5c5c5c" strokeWidth="3" />
    </St>
    <St>
      <path d="M23 1.500l7 6-3 6-8-7z" fill="#fafafa" stroke="#6c6c6c" strokeWidth="1.600" />
      <path d="M18 6l9 8q-4 12-15 14l-5 1-3 2.500L1.500 29 4 26Q3 12 18 6z" fill="url(#sky)" stroke="#1458a8" strokeWidth="1.800" />
      <path d="M9 16q3-6 9-8" fill="none" stroke="#e8f8ff" strokeWidth="2.500" />
    </St>
    <St>
      <path d="M2 6h12l3-3h13v26H2z" fill="url(#grey)" stroke="#a0a0a0" strokeWidth="1.800" />
      <path d="M3 9h26" stroke="#f4f4f4" strokeWidth="2" />
    </St>
    <St>
      <path d="M2 8l6-6h23v18l-6 4H2z" fill="#2c84e4" stroke="#1c4c94" strokeWidth="1.200" />
      <path d="M3 8l6-5.500h21L24 8z" fill="#f0f8ff" />
      <rect x="2" y="8" width="23" height="15" fill="url(#blue)" stroke="#e8f0f8" strokeWidth="1.500" />
      <path d="M3 24h21l-3 6H6z" fill="#f4f4f4" stroke="#5c5c5c" strokeWidth="1.500" />
    </St>
    <St>
      <path d="M12 8H2v21h22V19" fill="#f4f4f4" stroke="#5c5c5c" strokeWidth="2" />
      <path d="M5 10h8l3 9h6v6H5z" fill="#1c70e0" />
      <rect x="13" y="2" width="17" height="15" fill="#9cb0f8" stroke="#3c4cb4" strokeWidth="1.800" />
      <path d="M11 3v12M8 4v10" stroke="#3c4cb4" strokeWidth="1.800" />
    </St>
    <St>
      <path d="M1 4h30M1 9h30M1 14h30M1 19h30M1 24h30M6 1v30M11 1v30M16 1v30M21 1v30M26 1v30" stroke="#4c54b4" strokeWidth="1.600" />
      <rect x="3" y="3" width="26" height="26" rx="2" fill="#8c9cf0" stroke="#4048a8" strokeWidth="1.800" />
      <path d="M10 7v9q0 7 6 8 6-1 6-8V7h-4v10q-2 2-4 0V7z" fill="#fff" />
    </St>
    <St>
      <circle cx="17" cy="15" r="13.500" fill="#5cb4f0" stroke="#1c60a4" strokeWidth="1.500" />
      <path d="M15 2q4 6 4 14-1 8-7 13-10 0-11-9Q1 9 15 2z" fill="#c4e8fc" stroke="#1c60a4" strokeWidth="1.500" />
      <path d="M2 18q8-3 16 0" fill="none" stroke="#1c60a4" strokeWidth="1.500" />
      <path d="M15 11l7-1 9 9-1 4-10 8-2-5 4-5-6-5z" fill="#a4e44c" stroke="#2c7c14" strokeWidth="1.800" />
      <path d="M14 23l4 1 4 6-7 1z" fill="#4cb01c" stroke="#2c7c14" />
    </St>
    <St>
      <rect x="1.500" y="1.500" width="29" height="29" rx="3" fill="#eef6fc" stroke="#2c6cb0" strokeWidth="3" />
      <path d="M12 7h8v8h6l-10 10L6 15h6z" fill="#6ce00c" stroke="#2c8808" strokeWidth="1.600" />
    </St>
  </>
);

const FirewallGroup = ({ title, width, first }: { title: string; width: number; first?: boolean }) => (
  <Group $first={first}>
    <GroupTitle>
      <Fit w={width}>{title}</Fit>
      <GroupRule />
    </GroupTitle>
    <Option $h={200.7}>
      <Glyph $top={8.2}><Shield ok /></Glyph>
      <OptionBody>
        <Glyph $top={8.5} />
        <RadioRow>
          <Radio />
          <Fit w={341.5}>Включение брандмауэра Windows</Fit>
        </RadioRow>
        <CheckRow $gap={26}>
          <CheckBox />
          <div>
            <Fit w={911}>Блокирование всех входящих подключений, включая подключения, указанные в списке</Fit>
            <Fit w={236}>разрешенных программ</Fit>
          </div>
        </CheckRow>
        <CheckRow $gap={24.3}>
          <CheckBox><DisabledCheck /></CheckBox>
          <Fit w={708}>Уведомлять, когда брандмауэр Windows блокирует новую программу</Fit>
        </CheckRow>
      </OptionBody>
    </Option>
    <Option $h={60}>
      <Glyph $top={0.3}><Shield /></Glyph>
      <OptionBody>
        <RadioRow>
          <Radio on />
          <Fit w={539.5}>Отключить брандмауэр Windows (не рекомендуется)</Fit>
        </RadioRow>
      </OptionBody>
    </Option>
  </Group>
);

export default function App() {
  return (
    <Desktop>
      <Global />
      <Defs />
      <HostTitle>
        <span />
        <Fit w={386}>ubuntu16.04 on QEMU/KVM</Fit>
        <HostControls>
          <RoundButton>
            <svg width="44" height="44"><path d="M14 29h16" stroke="#fff" strokeWidth="2.200" /></svg>
          </RoundButton>
          <RoundButton>
            <svg width="44" height="44">
              <path d="M18 16.500h11.500V28" fill="none" stroke="#999" strokeWidth="2" />
              <rect x="15" y="20.500" width="10.500" height="10.500" fill="none" stroke="#fff" strokeWidth="2.200" />
            </svg>
          </RoundButton>
          <RoundButton>
            <svg width="44" height="44"><path d="M14.500 15.500l15 15M29.500 15.500l-15 15" stroke="#fff" strokeWidth="2.400" /></svg>
          </RoundButton>
        </HostControls>
      </HostTitle>
      <HostMenu>
        <MenuItem $gap={0}><Fit w={46}>File</Fit></MenuItem>
        <MenuItem $gap={33.5}><Fit w={209}>Virtual Machine</Fit></MenuItem>
        <MenuItem $gap={33.5}><Fit w={65.5}>View</Fit></MenuItem>
        <MenuItem $gap={32}><Fit w={119.5}>Send Key</Fit></MenuItem>
      </HostMenu>
      <HostToolbar>
        <ToolButton $w={84} $active><IconMonitor /></ToolButton>
        <ToolButton $w={88}><IconInfo /></ToolButton>
        <Glyph $gap={12}><ToolSeparator /></Glyph>
        <Glyph $gap={41}>
          <svg width="32" height="36"><path d="M0 0L32 18 0 36z" fill="#8f8f8f" /></svg>
        </Glyph>
        <Glyph $gap={53.5}>
          <svg width="31" height="30"><path d="M0 0h12.500v30H0zM18.500 0H31v30H18.500z" fill="#f6f6f6" /></svg>
        </Glyph>
        <Glyph $gap={46.5}>
          <svg width="42" height="43" viewBox="0 0 42 43">
            <circle cx="21" cy="22.500" r="20.500" fill="#151515" />
            <circle cx="21" cy="21.500" r="20.800" fill="#c7162b" />
            <path d="M14 12.500a12 12 0 1 0 14 0M21 8.500v14" fill="none" stroke="#fff" strokeWidth="2.600" />
          </svg>
        </Glyph>
        <Glyph $gap={50}>
          <svg width="20" height="12"><path d="M1 1l9 9.500L19 1" fill="none" stroke="#f6f6f6" strokeWidth="2" /></svg>
        </Glyph>
        <Glyph $gap={40}><ToolSeparator /></Glyph>
        <Glyph $gap={32}><IconScreens /></Glyph>
        <Spring />
        <svg width="67" height="44" viewBox="0 0 67 44">
          <path d="M26 19L41 3M28 2h14v14M17 25L2 41M1.500 29v13.500H15" fill="none" stroke="#fff" strokeWidth="2.800" />
        </svg>
      </HostToolbar>

      <VmScreen>
        <TopPanel>
          <Fit w={708}>win7_x64node1 [Running] - Oracle VM VirtualBox</Fit>
          <Spring />
          <Indicator $gap={0} $top={2}>
            <svg width="35" height="36" viewBox="0 0 35 36">
              <path d="M10 0l9 9.500h-5V25H6V9.500H1zM25 36l9-9.500h-5V11h-8v15.500h-5z" fill="#dfdbd2" />
            </svg>
          </Indicator>
          <LangBox><Fit w={26}>En</Fit></LangBox>
          <Indicator $gap={24.5} $top={3}>
            <svg width="39" height="34" viewBox="0 0 39 34">
              <path d="M0 11.500h5L14 5v24L5 23.500H0z" fill="#dfdbd2" />
              <path d="M18 11q4 6 0 12M24 7q7 10 0 20" fill="none" stroke="#dfdbd2" strokeWidth="3" />
              <path d="M30 2q12 15 0 30" fill="none" stroke="#8f8c84" strokeWidth="3" />
            </svg>
          </Indicator>
          <Indicator $gap={27}><Fit w={70}>18:13</Fit></Indicator>
          <Indicator $gap={26} $top={1}>
            <svg width="32" height="34" viewBox="0 0 32 34">
              <path d="M11 9.500a10 10 0 1 0 10 0M16 1v18" fill="none" stroke="#dfdbd2" strokeWidth="4" />
              <path d="M16 28v6M0 18h6M26 18h6M4 6l4.500 4.500M28 6l-4.500 4.500M4 30l4.500-4.500M28 30l-4.500-4.500" stroke="#dfdbd2" strokeWidth="4.500" />
            </svg>
          </Indicator>
        </TopPanel>
        <VmBody>
          <Launcher>
            <Tile $kind="dash"><DashArt /></Tile>
            <Tile><TerminalArt /></Tile>
            <Tile><FilesArt /></Tile>
            <Tile><FirefoxArt /></Tile>
            <Tile><WriterArt /></Tile>
            <Tile><CalcArt /></Tile>
            <Tile><ImpressArt /></Tile>
            <Tile><SoftwareArt /></Tile>
            <Tile><AmazonArt /></Tile>
            <Tile><SettingsArt /></Tile>
            <Tile $kind="active">
              <VBoxArt />
              <RunMark $side="left">
                <svg width="10" height="16"><path d="M0 1.500h6L10 4 6 6.500H0zM0 9.500h6l4 2.500-4 2.500H0z" fill="#d8d4d6" /></svg>
              </RunMark>
              <RunMark $side="right">
                <svg width="10" height="16"><path d="M10 1v14L0 8z" fill="#d8d4d6" /></svg>
              </RunMark>
            </Tile>
            <Tile $push={61}><TrashArt /></Tile>
          </Launcher>
          <VmMain>
            <VmMenu>
              <MenuItem $gap={0}><Fit w={47}>File</Fit></MenuItem>
              <MenuItem $gap={39}><Fit w={112}>Machine</Fit></MenuItem>
              <MenuItem $gap={37}><Fit w={67}>View</Fit></MenuItem>
              <MenuItem $gap={38}><Fit w={71}>Input</Fit></MenuItem>
              <MenuItem $gap={38}><Fit w={103}>Devices</Fit></MenuItem>
              <MenuItem $gap={38}><Fit w={62}>Help</Fit></MenuItem>
            </VmMenu>
            <GuestArea>
              <Guest>
                <WinTitle>
                  <Firewall />
                  <WinTitleText><Fit w={260.5}>Настроить параметры</Fit></WinTitleText>
                  <Spring />
                  <WinButton>
                    <svg width="32" height="28"><path d="M8 21h12" stroke="#000" strokeWidth="4" /></svg>
                  </WinButton>
                  <WinButton>
                    <svg width="32" height="28">
                      <path d="M12 6h10.500v9H19M12 5h11.500M12 4v5" fill="none" stroke="#000" strokeWidth="2" />
                      <rect x="7" y="11.500" width="10.500" height="9" fill="#d4d0c8" stroke="#000" strokeWidth="2" />
                      <path d="M6 11h12.500" stroke="#000" strokeWidth="3.500" />
                    </svg>
                  </WinButton>
                  <WinButton $gap={4}>
                    <svg width="32" height="28"><path d="M8.500 7l14 13M22.500 7l-14 13" stroke="#000" strokeWidth="3.400" /></svg>
                  </WinButton>
                </WinTitle>
                <NavBar>
                  <Glyph $top={-3.5}><NavArrows /></Glyph>
                  <AddressBox>
                    <Glyph $top={0.5}><Firewall /></Glyph>
                    <Glyph $gap={15} $top={16}><DownTri w={11} h={7} /></Glyph>
                    <Crumb $gap={11}><Fit w={210}>Брандмауэр Windows</Fit></Crumb>
                    <Glyph $gap={13} $top={16}><DownTri w={10} h={7} /></Glyph>
                    <Crumb $gap={11.5}><Fit w={223.5}>Настроить параметры</Fit></Crumb>
                    <Spring />
                    <Glyph $top={15.5}><DownTri w={15} h={9} /></Glyph>
                    <Glyph $gap={21.5} $top={1.5}><Refresh /></Glyph>
                  </AddressBox>
                  <SearchBox><Fit w={280.5}>Поиск в панели управления</Fit></SearchBox>
                  <Glyph $gap={1} $top={1.5}><FindButton /></Glyph>
                </NavBar>
                <Page>
                  <Heading><Fit w={552}>Настройка параметров для каждого типа сети</Fit></Heading>
                  <Paragraph>
                    <Fit w={999}>Можно изменить параметры брандмауэра для каждого используемого типа сетевого размещения.</Fit>
                  </Paragraph>
                  <LinkLine><Fit w={524.5}>Дополнительные сведения о сетевых размещениях</Fit></LinkLine>
                  <FirewallGroup first title="Параметры размещения в домашней или рабочей (частной) сети" width={654} />
                  <FirewallGroup title="Параметры размещения в общественной сети" width={465} />
                  <Buttons>
                    <PushButton $w={151.5}><Fit w={28}>ОК</Fit></PushButton>
                    <PushButton $w={150.5}><Fit w={74.5}>Отмена</Fit></PushButton>
                  </Buttons>
                </Page>
                <TaskBar>
                  <StartButton>
                    <WinFlag />
                    <StartText><Fit w={55.5}>Пуск</Fit></StartText>
                  </StartButton>
                  <Glyph $gap={35} $top={6}><IeArt /></Glyph>
                  <Glyph $gap={37} $top={12}><ExplorerArt /></Glyph>
                  <Glyph $gap={37.5} $top={15}><WmpArt /></Glyph>
                  <Glyph $gap={36.5} $top={8}><YBrowser /></Glyph>
                  <LetterDisc><NarrowLetter>Я</NarrowLetter></LetterDisc>
                  <ActiveTask><CplArt /></ActiveTask>
                  <Spring />
                  <LangText><Fit w={28}>RU</Fit></LangText>
                  <LangRule />
                  <Tray>
                    <svg width="33" height="32" viewBox="0 0 33 32">
                      <path d="M2 1h5v30H2zM7 4q6-3 11 0t13 2v13H7z" fill="#fff" stroke="#6c6c6c" strokeWidth="1.500" />
                      <circle cx="22" cy="22" r="10" fill="#dc2c2c" />
                      <path d="M17.500 17.500l9 9M26.500 17.500l-9 9" stroke="#fff" strokeWidth="3.200" />
                    </svg>
                    <Glyph $gap={15}>
                      <svg width="33" height="32" viewBox="0 0 33 32">
                        <rect x="8" y="5" width="24" height="20" fill="#fff" stroke="#6c6c6c" strokeWidth="1.500" />
                        <rect x="11" y="8" width="18" height="14" fill="#8c8c88" />
                        <path d="M15 26h8v3h5v2H11v-2h4z" fill="#fff" stroke="#6c6c6c" strokeWidth="1.200" />
                        <path d="M2 2v11h3v18h2.500V13H12V2" fill="#fff" stroke="#6c6c6c" strokeWidth="1.600" />
                        <path d="M7 0v9" stroke="#6c6c6c" strokeWidth="1.600" />
                      </svg>
                    </Glyph>
                    <Glyph $gap={15}>
                      <svg width="32" height="32" viewBox="0 0 32 32">
                        <path d="M1 10h5l8-9v30l-8-9H1z" fill="#fff" stroke="#6c6c6c" strokeWidth="1.500" />
                        <path d="M17 12q3 4 0 8M21 8q7 8 0 16M26 5q9 11 0 22" fill="none" stroke="#777" strokeWidth="3.600" />
                        <path d="M17 12q3 4 0 8M21 8q7 8 0 16M26 5q9 11 0 22" fill="none" stroke="#fff" strokeWidth="1.700" />
                      </svg>
                    </Glyph>
                    <Clock>
                      <Fit w={53.5}>18:12</Fit>
                      <Fit w={111}>03.05.2025</Fit>
                    </Clock>
                    <Glyph $gap={14} $top={4.5}>
                      <svg width="31" height="25" viewBox="0 0 31 25">
                        <rect width="31" height="19" fill="url(#desk)" stroke="#8cb0d8" />
                        <rect y="19" width="31" height="5" fill="#2f2f2f" />
                        <circle cx="7" cy="20" r="4.500" fill="#3a8fd8" />
                        <path d="M5 18h2v2H5z" fill="#e8542c" /><path d="M7.500 19h2v2h-2z" fill="#9cd83c" />
                      </svg>
                    </Glyph>
                  </Tray>
                </TaskBar>
              </Guest>
            </GuestArea>
            <StatusBar>
              <StatusIcons />
              <HostKey><Fit w={126.5}>Right Ctrl</Fit></HostKey>
            </StatusBar>
          </VmMain>
        </VmBody>
      </VmScreen>
      <Pointer>
        <svg width="32" height="46" viewBox="0 0 32 46">
          <path d="M6 6v31l7-7 6 12 5-3-5-11h9z" fill="#000" opacity="0.25" />
          <path d="M1.500 2v32l7.500-7 6.500 13q3 2 4.500-2l-6-12.500h10z" fill="#fff" stroke="#000" strokeWidth="1.700" />
        </svg>
      </Pointer>
    </Desktop>
  );
}
